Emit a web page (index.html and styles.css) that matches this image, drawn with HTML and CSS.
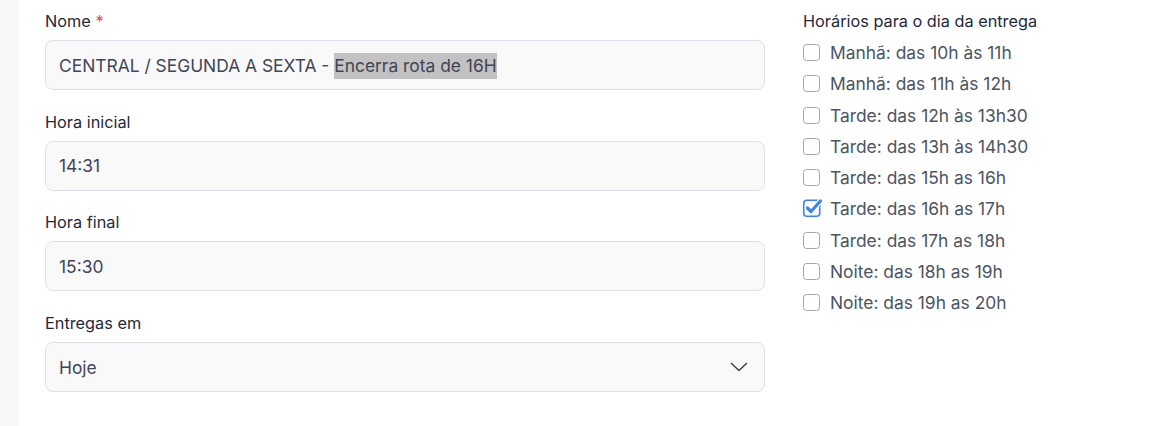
FILE: index.html
```html
<!DOCTYPE html>
<html lang="pt-BR">
<head>
<meta charset="utf-8">
<title>Rota</title>
<link rel="stylesheet" href="styles.css">
</head>
<body>
<div class="panel">
  <div class="form">
    <div class="col-left">
      <div class="group">
        <div class="label">Nome <span class="req">*</span></div>
        <div class="input"><span>CENTRAL / SEGUNDA A SEXTA - <span class="sel">Encerra rota de 16H</span></span></div>
      </div>
      <div class="group">
        <div class="label">Hora inicial</div>
        <div class="input">14:31</div>
      </div>
      <div class="group">
        <div class="label">Hora final</div>
        <div class="input">15:30</div>
      </div>
      <div class="group">
        <div class="label">Entregas em</div>
        <div class="input select">
          <span>Hoje</span>
          <svg class="chev" width="18" height="10" viewBox="0 0 18 10"><path d="M1.5 1.5 L9 8.5 L16.5 1.5" fill="none" stroke="#374151" stroke-width="1.5" stroke-linecap="round" stroke-linejoin="round"/></svg>
        </div>
      </div>
    </div>
    <div class="col-right">
      <div class="label">Horários para o dia da entrega</div>
      <div class="checks">
        <div class="row"><span class="box"></span><span>Manhã: das 10h às 11h</span></div>
        <div class="row"><span class="box"></span><span>Manhã: das 11h às 12h</span></div>
        <div class="row"><span class="box"></span><span>Tarde: das 12h às 13h30</span></div>
        <div class="row"><span class="box"></span><span>Tarde: das 13h às 14h30</span></div>
        <div class="row"><span class="box"></span><span>Tarde: das 15h as 16h</span></div>
        <div class="row"><svg class="cbox" width="22" height="22" viewBox="0 0 22 22"><rect x="2.75" y="4.25" width="16" height="16" rx="3" fill="#fff" stroke="#3b82f6" stroke-width="1.6"/><path d="M6.5 12 L10 15.5 L19.5 5" fill="none" stroke="#fff" stroke-width="5.5" stroke-linecap="round" stroke-linejoin="round"/><path d="M6.5 12 L10 15.5 L19.5 5" fill="none" stroke="#3b82f6" stroke-width="3.2" stroke-linecap="round" stroke-linejoin="round"/></svg><span>Tarde: das 16h as 17h</span></div>
        <div class="row"><span class="box"></span><span>Tarde: das 17h as 18h</span></div>
        <div class="row"><span class="box"></span><span>Noite: das 18h as 19h</span></div>
        <div class="row"><span class="box"></span><span>Noite: das 19h as 20h</span></div>
      </div>
    </div>
  </div>
</div>
</body>
</html>
```

FILE: styles.css
```css
html, body {
  margin: 0;
  padding: 0;
  height: 100%;
}
body {
  background: #f7f7f8;
  font-family: Inter, "Noto Sans", "Liberation Sans", sans-serif;
  color: #1f2937;
}
.panel {
  margin-left: 19px;
  background: #ffffff;
  min-height: 100%;
  box-sizing: border-box;
  padding: 10px 0 0 26px;
}
.form {
  display: grid;
  grid-template-columns: 720px 1fr;
  column-gap: 38px;
}
.group {
  margin-bottom: 20.7px;
}
.label {
  font-size: 16.3px;
  line-height: 22px;
  color: #1f2937;
  margin-bottom: 8px;
}
.req {
  color: #f43f5e;
}
.input {
  box-sizing: border-box;
  height: 50px;
  border: 1px solid #dde0ea;
  border-radius: 8px;
  background: #f9f9fa;
  padding: 0 13px;
  display: flex;
  align-items: center;
  font-size: 17.4px;
  color: #3f4656;
  white-space: nowrap;
}
.sel {
  background: #c2c2c2;
  padding: 2px 0 3px;
}
.select {
  justify-content: space-between;
  padding-right: 16px;
}
.col-right .label {
  margin-bottom: 5px;
}
.checks {
  display: flex;
  flex-direction: column;
}
.row {
  height: 31.25px;
  display: flex;
  align-items: center;
  gap: 10px;
  font-size: 17.4px;
  color: #4b5563;
}
.box {
  width: 17px;
  height: 17px;
  box-sizing: border-box;
  border: 1.6px solid #a0a4b4;
  border-radius: 3.5px;
  background: #fff;
  flex: none;
}
.cbox {
  flex: none;
  margin: -4px -3px 0 -2px;
}
```
